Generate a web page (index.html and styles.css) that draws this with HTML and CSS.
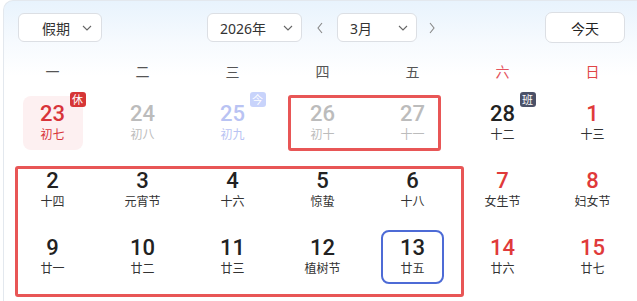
FILE: index.html
```html
<!DOCTYPE html>
<html lang="zh-CN">
<head>
    <meta charset="UTF-8">
    <meta name="viewport" content="width=device-width, initial-scale=1.0">
    <title>日历</title>
    <link rel="stylesheet" href="styles.css">
</head>
<body>
    <div class="calendar">
        <div class="toolbar">
            <button class="select holiday-select">假期<svg class="caret" viewBox="0 0 10 6"><path d="M1 1l4 4 4-4"/></svg></button>
            <div class="month-nav">
                <button class="select year-select">2026年<svg class="caret" viewBox="0 0 10 6"><path d="M1 1l4 4 4-4"/></svg></button>
                <span class="arrow"><svg viewBox="0 0 6 12"><path d="M5 1L1 6l4 5"/></svg></span>
                <button class="select month-select">3月<svg class="caret" viewBox="0 0 10 6"><path d="M1 1l4 4 4-4"/></svg></button>
                <span class="arrow"><svg viewBox="0 0 6 12"><path d="M1 1l4 5-4 5"/></svg></span>
            </div>
            <button class="today-btn">今天</button>
        </div>

        <div class="weekdays">
            <span>一</span><span>二</span><span>三</span><span>四</span><span>五</span>
            <span class="sat">六</span><span class="sun">日</span>
        </div>

        <div class="days">
            <div class="day"><div class="cell holiday"><b>23</b><small>初七</small><i class="badge rest">休</i></div></div>
            <div class="day"><div class="cell other"><b>24</b><small>初八</small></div></div>
            <div class="day"><div class="cell other pale"><b>25</b><small>初九</small><i class="badge now">今</i></div></div>
            <div class="day"><div class="cell other"><b>26</b><small>初十</small></div></div>
            <div class="day"><div class="cell other"><b>27</b><small>十一</small></div></div>
            <div class="day"><div class="cell"><b>28</b><small>十二</small><i class="badge work">班</i></div></div>
            <div class="day"><div class="cell weekend"><b>1</b><small>十三</small></div></div>

            <div class="day"><div class="cell"><b>2</b><small>十四</small></div></div>
            <div class="day"><div class="cell"><b>3</b><small>元宵节</small></div></div>
            <div class="day"><div class="cell"><b>4</b><small>十六</small></div></div>
            <div class="day"><div class="cell"><b>5</b><small>惊蛰</small></div></div>
            <div class="day"><div class="cell"><b>6</b><small>十八</small></div></div>
            <div class="day"><div class="cell weekend"><b>7</b><small>女生节</small></div></div>
            <div class="day"><div class="cell weekend"><b>8</b><small>妇女节</small></div></div>

            <div class="day"><div class="cell"><b>9</b><small>廿一</small></div></div>
            <div class="day"><div class="cell"><b>10</b><small>廿二</small></div></div>
            <div class="day"><div class="cell"><b>11</b><small>廿三</small></div></div>
            <div class="day"><div class="cell"><b>12</b><small>植树节</small></div></div>
            <div class="day"><div class="cell today"><b>13</b><small>廿五</small></div></div>
            <div class="day"><div class="cell weekend"><b>14</b><small>廿六</small></div></div>
            <div class="day"><div class="cell weekend"><b>15</b><small>廿七</small></div></div>
        </div>

        <div class="mark mark-small"></div>
        <div class="mark mark-big"></div>
    </div>
</body>
</html>
```

FILE: styles.css
```css
* {
    margin: 0;
    padding: 0;
    box-sizing: border-box;
    font-family: 'Noto Sans', 'Noto Sans CJK SC', sans-serif;
}

body {
    background: #fff;
    overflow: hidden;
}

.calendar {
    position: relative;
    margin-left: 3px;
    width: 634px;
    height: 301px;
    border: 1px solid #e3e8ee;
    border-right: none;
    border-bottom: none;
    border-radius: 10px 0 0 0;
    background: linear-gradient(180deg, #e8f3fd 0%, #f6fafe 40px, #ffffff 75px);
}

.toolbar {
    display: flex;
    align-items: center;
    padding: 11px 0 0 14px;
    height: 42px;
}

.select {
    display: flex;
    align-items: center;
    justify-content: space-between;
    height: 29px;
    background: #fff;
    border: 1px solid #dcdfe4;
    border-radius: 6px;
    font-size: 14px;
    color: #333;
    cursor: pointer;
}

.caret {
    width: 10px;
    height: 6px;
    fill: none;
    stroke: #666;
    stroke-width: 1.1;
}

.holiday-select {
    width: 84px;
    padding: 0 9px 0 23px;
}

.month-nav {
    display: flex;
    align-items: center;
    margin-left: 105px;
}

.year-select {
    width: 95px;
    padding: 0 8px 0 12px;
}

.month-select {
    width: 80px;
    padding: 0 8px 0 12px;
}

.arrow {
    display: flex;
    justify-content: center;
    width: 35px;
}

.arrow:last-child {
    width: 30px;
}

.arrow svg {
    width: 6px;
    height: 12px;
    fill: none;
    stroke: #888;
    stroke-width: 1.1;
}

.today-btn {
    margin-left: 98px;
    width: 80px;
    height: 31px;
    background: #fff;
    border: 1px solid #dcdfe4;
    border-radius: 7px;
    font-size: 14px;
    color: #222;
    cursor: pointer;
}

.weekdays,
.days {
    display: grid;
    grid-template-columns: repeat(7, 90px);
    margin-left: 3.5px;
}

.weekdays {
    margin-top: 16px;
    line-height: 26px;
    text-align: center;
    font-size: 14px;
    color: #555;
}

.weekdays .sat {
    color: #e4545e;
}

.weekdays .sun {
    color: #e04646;
}

.days {
    margin-top: 4px;
    grid-auto-rows: 67px;
}

.day {
    display: flex;
    align-items: center;
    justify-content: center;
}

.cell {
    position: relative;
    display: flex;
    flex-direction: column;
    align-items: center;
    justify-content: center;
    gap: 3px;
    width: 60px;
    height: 54px;
    border-radius: 8px;
    color: #222;
}

.cell b {
    font-family: Roboto, 'Noto Sans', sans-serif;
    font-size: 22px;
    font-weight: 500;
    line-height: 22px;
}

.cell small {
    font-family: Lato, 'Noto Sans CJK SC', sans-serif;
    font-size: 12px;
    line-height: 14px;
    color: #333;
}

.cell.holiday {
    background: #fdf0f1;
    color: #d8343a;
}

.cell.holiday small {
    color: #d8343a;
}

.cell.other,
.cell.other small {
    color: #bcbcbc;
}

.cell.pale,
.cell.pale small {
    color: #b9c3f3;
}

.cell.weekend {
    color: #e03a3a;
}

.cell.today {
    width: 63px;
    border: 2px solid #4d6bd6;
}

.badge {
    position: absolute;
    top: -4px;
    right: -3px;
    width: 16px;
    height: 15px;
    border-radius: 3px;
    font-size: 11px;
    font-style: normal;
    line-height: 15px;
    text-align: center;
    color: #fff;
}

.badge.rest {
    background: #d63636;
}

.badge.now {
    background: #c8d3fb;
}

.badge.work {
    background: #4b5168;
}

.mark {
    position: absolute;
    border: 3px solid #e85656;
    border-radius: 3px;
}

.mark-small {
    left: 284px;
    top: 94px;
    width: 153px;
    height: 56px;
}

.mark-big {
    left: 11px;
    top: 165px;
    width: 449px;
    height: 131px;
    border-width: 3.5px;
}
```
